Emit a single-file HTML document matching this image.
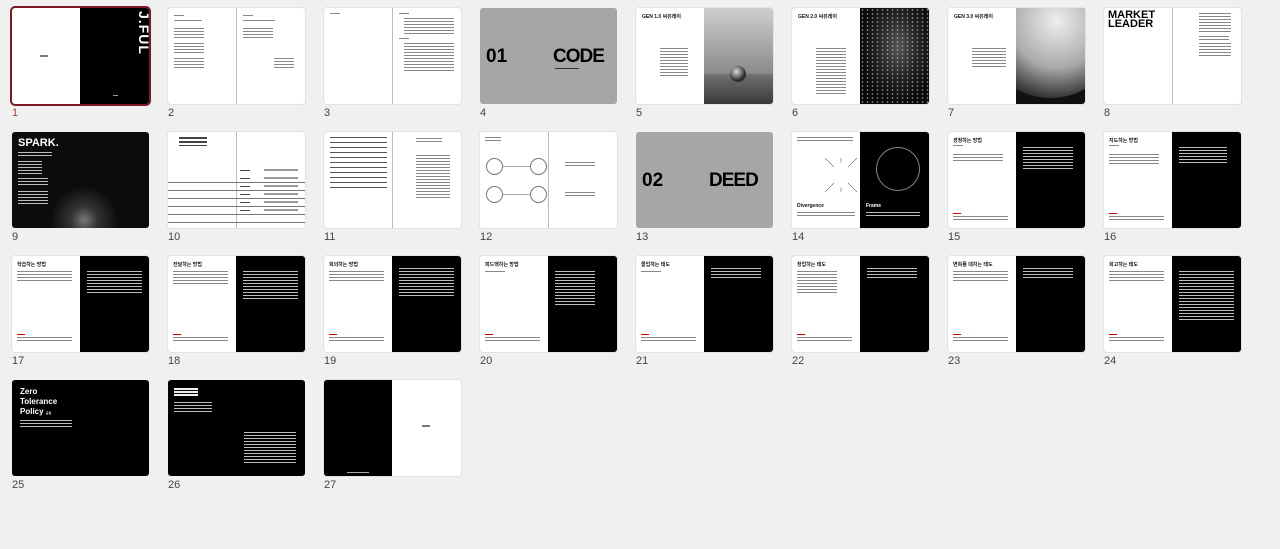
<!DOCTYPE html>
<html><head><meta charset="utf-8"><style>
*{margin:0;padding:0;box-sizing:border-box}
body{width:1280px;height:549px;background:#f0f0f0;position:relative;overflow:hidden;font-family:"Liberation Sans","Noto Sans CJK KR",sans-serif}
.p{position:absolute;width:137px;height:96px;background:#fff;border-radius:3px;overflow:hidden;box-shadow:0 0 0 1px #e2e2e2}
.n{position:absolute;font-size:11px;color:#444}
.a{position:absolute}
.t{position:absolute;background:repeating-linear-gradient(#888 0 1px,transparent 1px 3px)}
.tw{position:absolute;background:repeating-linear-gradient(#bbb 0 1px,transparent 1px 3px)}
.blk{position:absolute;top:0;bottom:0;background:#000}
.dv{position:absolute;top:0;bottom:0;left:68px;width:1px;background:#bbb}
.h{position:absolute;font-weight:bold;font-size:5px;color:#111}
</style></head><body>

<div class="p" style="left:12px;top:8px;box-shadow:0 0 0 2px #7a1c22">
 <div class="blk" style="left:68px;right:0"></div>
 <div class="a" style="left:124px;top:3px;color:#fff;font-weight:bold;font-size:14px;writing-mode:vertical-rl;letter-spacing:1px">J.FUL</div>
 <div class="a" style="left:28px;top:47px;width:8px;height:2px;background:#777"></div>
 <div class="a" style="left:101px;top:87px;width:5px;height:1px;background:#999"></div>
</div>
<div class="n" style="left:12px;top:107px;color:#c0392b">1</div>

<div class="p" style="left:168px;top:8px"><div class="dv"></div>
 <div class="t" style="left:6px;top:7px;width:10px;height:2px"></div>
 <div class="t" style="left:6px;top:12px;width:28px;height:2px"></div>
 <div class="t" style="left:6px;top:20px;width:30px;height:12px"></div>
 <div class="t" style="left:6px;top:35px;width:30px;height:12px"></div>
 <div class="t" style="left:6px;top:50px;width:30px;height:12px"></div>
 <div class="t" style="left:75px;top:7px;width:10px;height:2px"></div>
 <div class="t" style="left:75px;top:12px;width:32px;height:2px"></div>
 <div class="t" style="left:75px;top:20px;width:30px;height:10px"></div>
 <div class="t" style="left:106px;top:50px;width:20px;height:12px"></div>
</div>
<div class="n" style="left:168px;top:107px">2</div>

<div class="p" style="left:324px;top:8px"><div class="dv"></div>
 <div class="t" style="left:6px;top:5px;width:10px;height:2px"></div>
 <div class="t" style="left:75px;top:5px;width:10px;height:2px"></div>
 <div class="t" style="left:80px;top:10px;width:50px;height:16px"></div>
 <div class="t" style="left:75px;top:30px;width:10px;height:2px"></div>
 <div class="t" style="left:80px;top:35px;width:50px;height:30px"></div>
</div>
<div class="n" style="left:324px;top:107px">3</div>

<div class="p" style="left:480px;top:8px;background:#a6a6a6;box-shadow:none">
 <div class="a" style="left:6px;top:38px;font-weight:bold;font-size:19px;color:#000">01</div>
 <div class="a" style="left:73px;top:38px;font-weight:bold;font-size:19px;color:#000;letter-spacing:-1px">CODE</div>
 <div class="a" style="left:75px;top:60px;width:24px;height:1px;background:#333"></div>
</div>
<div class="n" style="left:480px;top:107px">4</div>

<div class="p" style="left:636px;top:8px">
 <div class="a" style="left:68px;top:0;right:0;bottom:0;background:linear-gradient(#cfcfcf,#8a8a8a 68%,#6e6e6e 70%,#3a3a3a)"></div>
 <div class="a" style="left:94px;top:58px;width:16px;height:16px;border-radius:50%;background:radial-gradient(circle at 40% 35%,#ddd,#333 60%,#111)"></div>
 <div class="h" style="left:6px;top:5px">GEN 1.0 씨뮤레이</div>
 <div class="t" style="left:24px;top:40px;width:28px;height:28px"></div>
</div>
<div class="n" style="left:636px;top:107px">5</div>

<div class="p" style="left:792px;top:8px">
 <div class="a" style="left:68px;top:0;right:0;bottom:0;background:radial-gradient(ellipse at 55% 40%,#555 0,#222 40%,#0a0a0a 70%)"></div>
 <div class="a" style="left:68px;top:0;right:0;bottom:0;background:radial-gradient(circle,#ccc 0 0.7px,transparent 1px) 0 0/5px 4px;opacity:.6"></div>
 <div class="h" style="left:6px;top:5px">GEN 2.0 씨뮤레이</div>
 <div class="t" style="left:24px;top:40px;width:30px;height:48px"></div>
</div>
<div class="n" style="left:792px;top:107px">6</div>

<div class="p" style="left:948px;top:8px">
 <div class="a" style="left:68px;top:0;right:0;bottom:0;background:#111"></div>
 <div class="a" style="left:40px;top:-20px;width:125px;height:110px;border-radius:50%;background:radial-gradient(circle at 55% 30%,#eee,#aaa 45%,#333 75%)"></div>
 <div class="a" style="left:0;top:0;width:68px;height:96px;background:#fff"></div>
 <div class="h" style="left:6px;top:5px">GEN 3.0 씨뮤레이</div>
 <div class="t" style="left:24px;top:40px;width:34px;height:20px"></div>
</div>
<div class="n" style="left:948px;top:107px">7</div>

<div class="p" style="left:1104px;top:8px"><div class="dv"></div>
 <div class="a" style="left:4px;top:3px;font-weight:900;font-size:11px;line-height:9px;color:#000">MARKET<br>LEADER</div>
 <div class="t" style="left:95px;top:5px;width:32px;height:20px"></div>
 <div class="t" style="left:95px;top:28px;width:30px;height:5px"></div>
 <div class="t" style="left:95px;top:35px;width:32px;height:14px"></div>
</div>
<div class="n" style="left:1104px;top:107px">8</div>

<div class="p" style="left:12px;top:132px;background:#0c0c0c;box-shadow:none">
 <div class="a" style="left:40px;top:40px;width:80px;height:60px;background:radial-gradient(ellipse at 40% 80%,#777 0,#333 20%,transparent 50%)"></div>
 <div class="a" style="left:6px;top:5px;color:#fff;font-weight:900;font-size:11px">SPARK.</div>
 <div class="tw" style="left:6px;top:20px;width:34px;height:5px"></div>
 <div class="tw" style="left:6px;top:29px;width:24px;height:14px"></div>
 <div class="tw" style="left:6px;top:46px;width:30px;height:9px"></div>
 <div class="tw" style="left:6px;top:59px;width:30px;height:14px"></div>
</div>
<div class="n" style="left:12px;top:231px">9</div>

<div class="p" style="left:168px;top:132px"><div class="dv"></div>
 <div class="t" style="left:11px;top:5px;width:28px;height:9px;background:repeating-linear-gradient(#444 0 2px,transparent 2px 4px)"></div>
 <div class="a" style="left:0;top:43px;right:0;height:56px;background:repeating-linear-gradient(transparent 0 7px,#777 7px 8px)"></div>
 <div class="t" style="left:72px;top:38px;width:10px;height:42px;background:repeating-linear-gradient(#444 0 1px,transparent 1px 8px)"></div>
 <div class="t" style="left:96px;top:37px;width:34px;height:48px;background:repeating-linear-gradient(#999 0 2px,transparent 2px 8px)"></div>
</div>
<div class="n" style="left:168px;top:231px">10</div>

<div class="p" style="left:324px;top:132px"><div class="dv" style="left:68px"></div>
 <div class="t" style="left:6px;top:5px;width:57px;height:55px;background:repeating-linear-gradient(#555 0 1px,transparent 1px 5px)"></div>
 <div class="t" style="left:92px;top:6px;width:26px;height:5px"></div>
 <div class="t" style="left:92px;top:23px;width:34px;height:44px"></div>
</div>
<div class="n" style="left:324px;top:231px">11</div>

<div class="p" style="left:480px;top:132px"><div class="dv"></div>
 <div class="t" style="left:5px;top:5px;width:16px;height:6px"></div>
 <div class="a" style="left:6px;top:26px;width:17px;height:17px;border:1px solid #777;border-radius:50%"></div>
 <div class="a" style="left:50px;top:26px;width:17px;height:17px;border:1px solid #777;border-radius:50%"></div>
 <div class="a" style="left:6px;top:54px;width:17px;height:17px;border:1px solid #777;border-radius:50%"></div>
 <div class="a" style="left:50px;top:54px;width:17px;height:17px;border:1px solid #777;border-radius:50%"></div>
 <div class="a" style="left:23px;top:34px;width:27px;height:1px;background:#aaa"></div>
 <div class="a" style="left:23px;top:62px;width:27px;height:1px;background:#aaa"></div>
 <div class="t" style="left:85px;top:30px;width:30px;height:6px"></div>
 <div class="t" style="left:85px;top:60px;width:30px;height:6px"></div>
</div>
<div class="n" style="left:480px;top:231px">12</div>

<div class="p" style="left:636px;top:132px;background:#a6a6a6;box-shadow:none">
 <div class="a" style="left:6px;top:38px;font-weight:bold;font-size:19px;color:#000">02</div>
 <div class="a" style="left:73px;top:38px;font-weight:bold;font-size:19px;color:#000;letter-spacing:-1px">DEED</div>
</div>
<div class="n" style="left:636px;top:231px">13</div>

<div class="p" style="left:792px;top:132px">
 <div class="blk" style="left:68px;right:0"></div>
 <div class="a" style="left:84px;top:15px;width:44px;height:44px;border:1px solid #888;border-radius:50%"></div>
 <div class="t" style="left:5px;top:5px;width:56px;height:5px"></div>
 <div class="a" style="left:33px;top:27px;font-size:9px;color:#000;line-height:8px">╲ ╵ ╱</div>
 <div class="a" style="left:33px;top:52px;font-size:9px;color:#000;line-height:8px">╱ ╷ ╲</div>
 <div class="h" style="left:5px;top:71px">Divergence</div>
 <div class="h" style="left:74px;top:71px;color:#fff">Frame</div>
 <div class="t" style="left:5px;top:80px;width:58px;height:4px"></div>
 <div class="tw" style="left:74px;top:80px;width:54px;height:4px"></div>
</div>
<div class="n" style="left:792px;top:231px">14</div>

<div class="p" style="left:948px;top:132px"><div class="blk" style="left:68px;right:0"></div>
 <div class="h" style="left:5px;top:5px">경청하는 방법</div><div class="t" style="left:5px;top:13px;width:10px;height:1px"></div>
 <div class="t" style="left:5px;top:22px;width:50px;height:7px"></div>
 <div class="a" style="left:5px;top:81px;width:8px;height:1px;background:#d00"></div>
 <div class="t" style="left:5px;top:84px;width:55px;height:4px"></div>
 <div class="tw" style="left:75px;top:15px;width:50px;height:24px"></div>
</div>
<div class="n" style="left:948px;top:231px">15</div>

<div class="p" style="left:1104px;top:132px"><div class="blk" style="left:68px;right:0"></div>
 <div class="h" style="left:5px;top:5px">지도하는 방법</div><div class="t" style="left:5px;top:13px;width:10px;height:1px"></div>
 <div class="t" style="left:5px;top:22px;width:50px;height:10px"></div>
 <div class="a" style="left:5px;top:81px;width:8px;height:1px;background:#d00"></div>
 <div class="t" style="left:5px;top:84px;width:55px;height:6px"></div>
 <div class="tw" style="left:75px;top:15px;width:48px;height:16px"></div>
</div>
<div class="n" style="left:1104px;top:231px">16</div>

<div class="p" style="left:12px;top:256px"><div class="blk" style="left:68px;right:0"></div>
 <div class="h" style="left:5px;top:5px">학습하는 방법</div><div class="t" style="left:5px;top:15px;width:55px;height:10px"></div>
 <div class="a" style="left:5px;top:78px;width:8px;height:1px;background:#d00"></div><div class="t" style="left:5px;top:81px;width:55px;height:4px"></div>
 <div class="tw" style="left:75px;top:15px;width:55px;height:24px"></div></div>
<div class="n" style="left:12px;top:355px">17</div>

<div class="p" style="left:168px;top:256px"><div class="blk" style="left:68px;right:0"></div>
 <div class="h" style="left:5px;top:5px">전달하는 방법</div><div class="t" style="left:5px;top:15px;width:55px;height:14px"></div>
 <div class="a" style="left:5px;top:78px;width:8px;height:1px;background:#d00"></div><div class="t" style="left:5px;top:81px;width:55px;height:4px"></div>
 <div class="tw" style="left:75px;top:15px;width:55px;height:30px"></div></div>
<div class="n" style="left:168px;top:355px">18</div>

<div class="p" style="left:324px;top:256px"><div class="blk" style="left:68px;right:0"></div>
 <div class="h" style="left:5px;top:5px">회의하는 방법</div><div class="t" style="left:5px;top:15px;width:55px;height:10px"></div>
 <div class="a" style="left:5px;top:78px;width:8px;height:1px;background:#d00"></div><div class="t" style="left:5px;top:81px;width:55px;height:4px"></div>
 <div class="tw" style="left:75px;top:12px;width:55px;height:30px"></div></div>
<div class="n" style="left:324px;top:355px">19</div>

<div class="p" style="left:480px;top:256px"><div class="blk" style="left:68px;right:0"></div>
 <div class="h" style="left:5px;top:5px">피드백하는 방법</div><div class="t" style="left:5px;top:15px;width:20px;height:2px"></div>
 <div class="a" style="left:5px;top:78px;width:8px;height:1px;background:#d00"></div><div class="t" style="left:5px;top:81px;width:55px;height:4px"></div>
 <div class="tw" style="left:75px;top:15px;width:40px;height:36px"></div></div>
<div class="n" style="left:480px;top:355px">20</div>

<div class="p" style="left:636px;top:256px"><div class="blk" style="left:68px;right:0"></div>
 <div class="h" style="left:5px;top:5px">몰입하는 태도</div><div class="t" style="left:5px;top:15px;width:20px;height:2px"></div>
 <div class="a" style="left:5px;top:78px;width:8px;height:1px;background:#d00"></div><div class="t" style="left:5px;top:81px;width:55px;height:4px"></div>
 <div class="tw" style="left:75px;top:12px;width:50px;height:12px"></div></div>
<div class="n" style="left:636px;top:355px">21</div>

<div class="p" style="left:792px;top:256px"><div class="blk" style="left:68px;right:0"></div>
 <div class="h" style="left:5px;top:5px">창업하는 태도</div><div class="t" style="left:5px;top:15px;width:40px;height:24px"></div>
 <div class="a" style="left:5px;top:78px;width:8px;height:1px;background:#d00"></div><div class="t" style="left:5px;top:81px;width:55px;height:4px"></div>
 <div class="tw" style="left:75px;top:12px;width:50px;height:12px"></div></div>
<div class="n" style="left:792px;top:355px">22</div>

<div class="p" style="left:948px;top:256px"><div class="blk" style="left:68px;right:0"></div>
 <div class="h" style="left:5px;top:5px">변화를 대하는 태도</div><div class="t" style="left:5px;top:15px;width:55px;height:12px"></div>
 <div class="a" style="left:5px;top:78px;width:8px;height:1px;background:#d00"></div><div class="t" style="left:5px;top:81px;width:55px;height:4px"></div>
 <div class="tw" style="left:75px;top:12px;width:50px;height:12px"></div></div>
<div class="n" style="left:948px;top:355px">23</div>

<div class="p" style="left:1104px;top:256px"><div class="blk" style="left:68px;right:0"></div>
 <div class="h" style="left:5px;top:5px">회고하는 태도</div><div class="t" style="left:5px;top:15px;width:55px;height:10px"></div>
 <div class="a" style="left:5px;top:78px;width:8px;height:1px;background:#d00"></div><div class="t" style="left:5px;top:81px;width:55px;height:4px"></div>
 <div class="tw" style="left:75px;top:15px;width:55px;height:50px"></div></div>
<div class="n" style="left:1104px;top:355px">24</div>

<div class="p" style="left:12px;top:380px;background:#000;box-shadow:none">
 <div class="a" style="left:8px;top:7px;color:#fff;font-weight:bold;font-size:8px;line-height:10px">Zero<br>Tolerance<br>Policy <span style="font-size:3px">규정</span></div>
 <div class="tw" style="left:8px;top:40px;width:52px;height:7px"></div>
</div>
<div class="n" style="left:12px;top:479px">25</div>

<div class="p" style="left:168px;top:380px;background:#000;box-shadow:none">
 <div class="tw" style="left:6px;top:8px;width:24px;height:8px;background:repeating-linear-gradient(#eee 0 2px,transparent 2px 3px)"></div>
 <div class="tw" style="left:6px;top:22px;width:38px;height:12px"></div>
 <div class="tw" style="left:76px;top:52px;width:52px;height:33px"></div>
</div>
<div class="n" style="left:168px;top:479px">26</div>

<div class="p" style="left:324px;top:380px">
 <div class="blk" style="left:0;width:68px"></div>
 <div class="a" style="left:23px;top:92px;width:22px;height:1px;background:#aaa"></div>
 <div class="a" style="left:98px;top:45px;width:8px;height:2px;background:#777"></div>
</div>
<div class="n" style="left:324px;top:479px">27</div>

</body></html>
